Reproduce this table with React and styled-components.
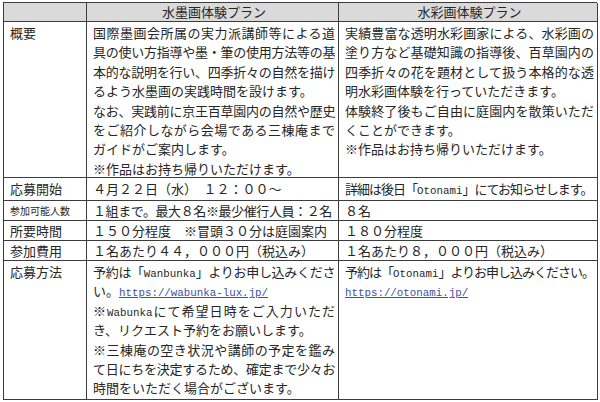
import styled, { createGlobalStyle } from "styled-components";

const GlobalStyle = createGlobalStyle`
    body {
        margin: 0;
        background: #ffffff;
        font-family: "Noto Sans CJK JP", "Noto Sans", sans-serif;
        color: #262626;
    }
`;

const Page = styled.div`
    width: 600px;
    height: 402px;
    padding: 2px 0 0 3px;
    box-sizing: border-box;
    overflow: hidden;
`;

const Table = styled.div`
    display: grid;
    grid-template-columns: 83px 252px 259px;
    grid-template-rows: 19px 156px 23px 20px 20px 20px 139px;
    border-top: 1px solid #3c3c3c;
    border-left: 1px solid #3c3c3c;
    width: 594px;
    box-sizing: border-box;
`;

const Cell = styled.div`
    box-sizing: border-box;
    border-right: 1px solid #3c3c3c;
    border-bottom: 1px solid #3c3c3c;
    background: ${(props) => (props.$head ? "#dadada" : "#ffffff")};
    padding: ${(props) => (props.$top ? "1px 3px 0 6px" : "0 3px 0 6px")};
    display: flex;
    flex-direction: column;
    justify-content: ${(props) => (props.$top ? "flex-start" : "center")};
    align-items: ${(props) => (props.$center ? "center" : "stretch")};
    font-size: 13px;
    line-height: 19.4px;
    overflow: hidden;
`;

const Label = styled.span`
    font-size: ${(props) => (props.$small ? "10px" : "13px")};
    white-space: nowrap;
`;

const Line = styled.div`
    height: 19.4px;
    line-height: 19.4px;
    flex: none;
    white-space: nowrap;
    letter-spacing: ${(props) => props.$squeeze || 0}px;
    text-align: justify;
    text-align-last: ${(props) => (props.$full ? "justify" : "left")};
`;

const Latin = styled.span`
    font-family: "Liberation Mono", monospace;
    font-size: 10.8px;
    line-height: 1;
    letter-spacing: 0;
`;

const Link = styled.a`
    color: #3f4fa3;
    text-decoration: underline;
    font-family: "Liberation Mono", monospace;
    font-size: 10.8px;
    line-height: 1;
    letter-spacing: 0;
`;

export default function App() {
    return (
        <Page>
            <GlobalStyle />
            <Table>
                <Cell $head />
                <Cell $head $center>水墨画体験プラン</Cell>
                <Cell $head $center>水彩画体験プラン</Cell>

                <Cell $top>
                    <Label>概要</Label>
                </Cell>
                <Cell $top>
                    <Line $full>国際墨画会所属の実力派講師等による道</Line>
                    <Line $full $squeeze={-0.5}>具の使い方指導や墨・筆の使用方法等の基</Line>
                    <Line $full $squeeze={-0.5}>本的な説明を行い、四季折々の自然を描け</Line>
                    <Line>るよう水墨画の実践時間を設けます。</Line>
                    <Line $full $squeeze={-0.5}>なお、実践前に京王百草園内の自然や歴史</Line>
                    <Line $full>をご紹介しながら会場である三棟庵まで</Line>
                    <Line>ガイドがご案内します。</Line>
                    <Line>※作品はお持ち帰りいただけます。</Line>
                </Cell>
                <Cell $top>
                    <Line $full>実績豊富な透明水彩画家による、水彩画の</Line>
                    <Line $full>塗り方など基礎知識の指導後、百草園内の</Line>
                    <Line $full>四季折々の花を題材として扱う本格的な透</Line>
                    <Line>明水彩画体験を行っていただきます。</Line>
                    <Line $full>体験終了後もご自由に庭園内を散策いただ</Line>
                    <Line>くことができます。</Line>
                    <Line>※作品はお持ち帰りいただけます。</Line>
                </Cell>

                <Cell>
                    <Label>応募開始</Label>
                </Cell>
                <Cell>
                    <Line>４月２２日（水）　１２：００～</Line>
                </Cell>
                <Cell>
                    <Line $squeeze={-1}>
                        詳細は後日「<Latin>Otonami</Latin>」にてお知らせします。
                    </Line>
                </Cell>

                <Cell>
                    <Label $small>参加可能人数</Label>
                </Cell>
                <Cell>
                    <Line $squeeze={-0.4}>１組まで。最大８名※最少催行人員：２名</Line>
                </Cell>
                <Cell>
                    <Line>８名</Line>
                </Cell>

                <Cell>
                    <Label>所要時間</Label>
                </Cell>
                <Cell>
                    <Line>１５０分程度　※冒頭３０分は庭園案内</Line>
                </Cell>
                <Cell>
                    <Line>１８０分程度</Line>
                </Cell>

                <Cell>
                    <Label>参加費用</Label>
                </Cell>
                <Cell>
                    <Line>１名あたり４４，０００円（税込み）</Line>
                </Cell>
                <Cell>
                    <Line>１名あたり８，０００円（税込み）</Line>
                </Cell>

                <Cell $top>
                    <Label>応募方法</Label>
                </Cell>
                <Cell $top>
                    <Line $full $squeeze={-0.4}>
                        予約は「<Latin>Wanbunka</Latin>」よりお申し込みくださ
                    </Line>
                    <Line>
                        い。<Link href="#">https://wabunka-lux.jp/</Link>
                    </Line>
                    <Line $full>
                        ※<Latin>Wabunka</Latin>にて希望日時をご入力いただ
                    </Line>
                    <Line>き、リクエスト予約をお願いします。</Line>
                    <Line $full>※三棟庵の空き状況や講師の予定を鑑み</Line>
                    <Line $full $squeeze={-0.5}>て日にちを決定するため、確定まで少々お</Line>
                    <Line>時間をいただく場合がございます。</Line>
                </Cell>
                <Cell $top>
                    <Line $squeeze={-1}>
                        予約は「<Latin>Otonami</Latin>」よりお申し込みください。
                    </Line>
                    <Line>
                        <Link href="#">https://otonami.jp/</Link>
                    </Line>
                </Cell>
            </Table>
        </Page>
    );
}
